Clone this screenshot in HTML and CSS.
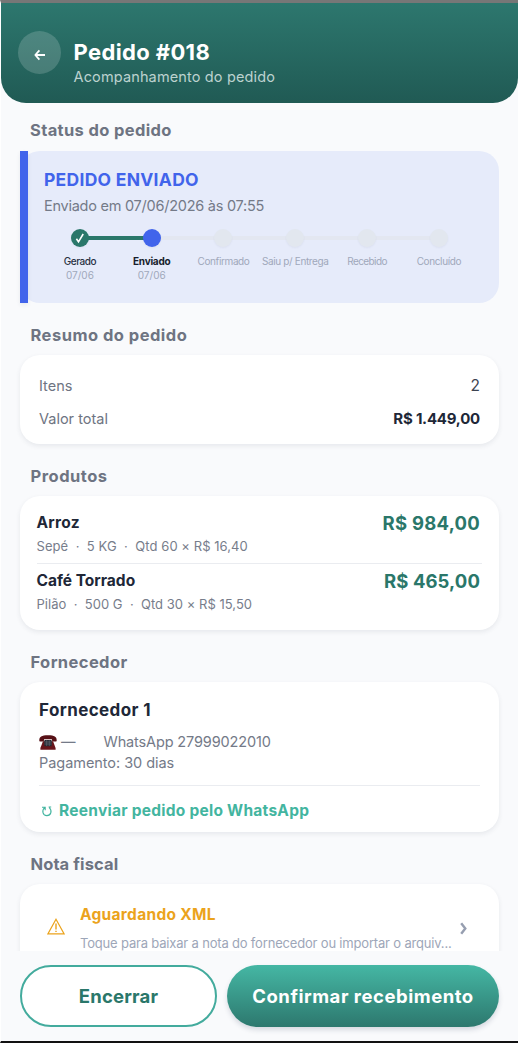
FILE: index.html
```html
<!DOCTYPE html>
<html lang="pt-BR">
<head>
<meta charset="utf-8">
<title>Pedido #018</title>
<link rel="stylesheet" href="styles.css">
</head>
<body>
<div class="app">
  <header class="header">
    <button class="back" aria-label="Voltar">
      <svg width="12" height="12" viewBox="0 0 12 12"><path d="M11 6H1.600M5.400 1.400 1.300 6l4.100 4.600" fill="none" stroke="#fff" stroke-width="1.800" stroke-linejoin="round"/></svg>
    </button>
    <div>
      <h1 class="title">Pedido #018</h1>
      <p class="subtitle">Acompanhamento do pedido</p>
    </div>
  </header>

  <main class="content">
    <h2 class="heading h-status">Status do pedido</h2>
    <section class="card status">
      <p class="status-name">PEDIDO ENVIADO</p>
      <p class="status-time">Enviado em 07/06/2026 às 07:55</p>
      <ol class="steps">
        <li class="step done"><span class="dot"><svg width="12" height="12" viewBox="0 0 12 12"><path d="M2.400 6.800 4.500 9.800 9.200 2" fill="none" stroke="#fff" stroke-width="1.600"/></svg></span><span class="label l1">Gerado</span><span class="date">07/06</span></li>
        <li class="step current"><span class="dot"></span><span class="label l2">Enviado</span><span class="date">07/06</span></li>
        <li class="step"><span class="dot"></span><span class="label l3">Confirmado</span></li>
        <li class="step"><span class="dot"></span><span class="label l3">Saiu p/ Entrega</span></li>
        <li class="step"><span class="dot"></span><span class="label l4">Recebido</span></li>
        <li class="step"><span class="dot"></span><span class="label l3">Concluído</span></li>
      </ol>
    </section>

    <h2 class="heading h-resumo">Resumo do pedido</h2>
    <section class="card summary">
      <div class="row"><span class="key">Itens</span><span class="count">2</span></div>
      <div class="row"><span class="key">Valor total</span><span class="total">R$ 1.449,00</span></div>
    </section>

    <h2 class="heading h-produtos">Produtos</h2>
    <section class="card products">
      <div class="product">
        <div class="line"><span class="name wide">Arroz</span><span class="price p1">R$ 984,00</span></div>
        <p class="detail">Sepé&nbsp; ·&nbsp; 5 KG&nbsp; ·&nbsp; Qtd 60 × R$ 16,40</p>
      </div>
      <div class="product">
        <div class="line"><span class="name">Café Torrado</span><span class="price">R$ 465,00</span></div>
        <p class="detail d2">Pilão&nbsp; ·&nbsp; 500 G&nbsp; ·&nbsp; Qtd 30 × R$ 15,50</p>
      </div>
    </section>

    <h2 class="heading h-fornecedor">Fornecedor</h2>
    <section class="card supplier">
      <p class="supplier-name">Fornecedor 1</p>
      <p class="contact">
        <svg class="phone" width="18" height="15" viewBox="0 0 18 15"><path d="M4 6.200h10L16.600 13v1.700H1.400V13Z" fill="#68151b"/><path d="M.3 5.600C.2 1.800 2.500.3 9 .3s8.800 1.500 8.700 5.300c0 .7-.4 1-1 1h-2.600c-.7 0-1-.5-1-1.200l-.2-1.200H5.100l-.2 1.200c0 .7-.3 1.200-1 1.200H1.300c-.6 0-1-.3-1-1Z" fill="#571116"/><rect x="5.200" y="5" width="7.600" height="6.200" rx="1" fill="#252a33"/><path d="M5.500 7h7M5.500 9h7M7.700 5.200v5.800M10.300 5.200v5.800" stroke="#747985" stroke-width=".5"/></svg>
        <span class="dash">—</span><span class="whats">WhatsApp 27999022010</span>
      </p>
      <p class="payment">Pagamento: 30 dias</p>
      <a class="resend"><svg width="12" height="12" viewBox="0 0 12 12"><path d="M1 2.200h3.200v3M3.900 2.400C.3 5.500 1.700 10.600 5.900 10.600c4 0 5.700-5 2.300-8M7.600 2h2.600" fill="none" stroke="#43b5a0" stroke-width="1.100"/></svg>Reenviar pedido pelo WhatsApp</a>
    </section>

    <h2 class="heading h-nota">Nota fiscal</h2>
    <section class="card invoice">
      <svg class="warn" width="18" height="17" viewBox="0 0 18 17"><path d="M9 1.300 17 15.800H1Z" fill="none" stroke="#eba31c" stroke-width="1.200"/><path d="M9 5.500v6M9 12.700v1.300" stroke="#eba31c" stroke-width="1.400"/></svg>
      <div class="invoice-text">
        <p class="invoice-title">Aguardando XML</p>
        <p class="invoice-hint">Toque para baixar a nota do fornecedor ou importar o arquiv...</p>
      </div>
      <svg class="chevron" width="8" height="13" viewBox="0 0 8 13"><path d="M1.200 1.200 5.300 6.500 1.200 11.800" fill="none" stroke="#969eb0" stroke-width="2.400"/></svg>
    </section>
  </main>

  <footer class="actions">
    <button class="btn outline">Encerrar</button>
    <button class="btn primary">Confirmar recebimento</button>
  </footer>
</div>
</body>
</html>
```
FILE: styles.css
```css
* { box-sizing: border-box; margin: 0; padding: 0; }
body { background: #fff; font-family: "Inter", "Open Sans", sans-serif; overflow: hidden; }
button { font-family: inherit; border: 0; }
svg { display: block; flex: none; }
p, h1, h2, span, a { white-space: nowrap; }

.app {
  width: 518px; height: 1043px;
  display: flex; flex-direction: column;
  border-top: 3px solid #777;
  border-bottom: 2px solid #111;
  border-left: 1px solid #fff;
  background: #f9fafc;
}

.header {
  flex: none; height: 100px;
  display: flex; gap: 12.5px;
  padding: 28px 17px 0;
  background: linear-gradient(#2d776e, #205a54);
  border-radius: 0 0 25px 25px;
  color: #fff;
}
.back {
  width: 43px; height: 43px; border-radius: 50%;
  background: rgba(255,255,255,.17);
  display: grid; place-items: center;
  padding-top: 4px;
}
.title { font-size: 22px; line-height: 28px; font-weight: 700; letter-spacing: .38px; margin-top: 7px; }
.subtitle { font-size: 14.5px; line-height: 20px; letter-spacing: .14px; color: #bcd2cf; margin-top: 1px; }

.content { flex: 1; min-height: 0; overflow: hidden; padding: 16px 19px 0; }
.heading {
  font-size: 16.5px; line-height: 22px; font-weight: 650; color: #6e7482;
  margin: 21px 0 9px 10.5px;
}
.h-status { margin: 0 0 10px 10px; letter-spacing: .36px; }
.h-resumo { letter-spacing: .48px; }
.h-produtos { letter-spacing: .5px; }
.h-fornecedor { letter-spacing: .4px; }
.h-nota { letter-spacing: .1px; }

.card {
  width: 479px; background: #fff; border-radius: 20px;
  box-shadow: 0 2px 5px rgba(40,50,80,.09);
}

.status { position: relative; height: 152px; padding: 18px 24px 0; background: #e6ebfa; box-shadow: none; }
.status::before { content: ""; position: absolute; left: 0; top: 0; width: 8px; height: 100%; background: #4164eb; box-shadow: 0 2px 4px rgba(40,50,80,.08); }
.status-name { font-size: 17.5px; line-height: 22px; font-weight: 700; letter-spacing: .28px; color: #4164eb; }
.status-time { font-size: 14.5px; line-height: 22px; letter-spacing: -.25px; color: #747a88; margin-top: 4px; }
.steps { display: grid; grid-template-columns: repeat(6, 71.8px); list-style: none; margin-top: 12px; }
.step { position: relative; display: flex; flex-direction: column; align-items: center; }
.step:not(:last-child)::after { content: ""; position: absolute; left: 50%; top: 7px; width: 100%; height: 4px; background: #e3e7f1; }
.step.done::after { background: #2a776a; }
.dot { position: relative; z-index: 1; width: 18px; height: 18px; border-radius: 50%; background: #e2e7ef; display: grid; place-items: center; box-shadow: 0 1px 2px rgba(60,70,100,.06); }
.done .dot { background: #2a776a; }
.current .dot { background: #4164eb; }
.label { font-size: 10px; line-height: 14px; margin-top: 7px; color: #a0a8ba; }
.l1 { color: #293142; letter-spacing: -.45px; font-weight: 500; }
.l2 { color: #171d2c; letter-spacing: -.25px; font-weight: 700; }
.l3 { letter-spacing: -.37px; }
.l4 { letter-spacing: -.58px; }
.date { font-size: 10px; line-height: 14px; color: #a0a8ba; }

.summary { height: 89px; padding: 14px 19px 0; }
.row { display: flex; justify-content: space-between; line-height: 33px; font-size: 14.5px; }
.key { color: #6e7482; }
.count { color: #3c4351; font-size: 15.5px; }
.total { font-size: 15px; font-weight: 700; letter-spacing: -.22px; color: #202737; }

.products { height: 134px; padding: 16px 17px 0 16.5px; }
.product + .product { border-top: 1px solid #eaecf0; padding-top: 6px; }
.line { display: flex; justify-content: space-between; line-height: 22px; padding-right: 2px; }
.name { font-size: 15.5px; font-weight: 650; letter-spacing: 0; color: #202737; }
.wide { letter-spacing: .3px; }
.price { font-size: 18.5px; font-weight: 700; letter-spacing: .1px; color: #2a776a; }
.p1 { letter-spacing: .25px; }
.detail { font-size: 13px; line-height: 20px; letter-spacing: .06px; color: #777d8b; margin-top: 2px; padding-bottom: 7px; }
.d2 { letter-spacing: .02px; }

.supplier { height: 150px; padding: 17px 19px 0; }
.supplier-name { font-size: 17px; line-height: 22px; font-weight: 650; letter-spacing: .4px; color: #202737; }
.contact { display: flex; align-items: center; height: 21px; margin-top: 10px; font-size: 14.5px; color: #747a88; }
.phone { margin-top: 2px; }
.dash { margin-left: 4px; width: 42.5px; }
.whats { letter-spacing: -.14px; }
.payment { font-size: 14.5px; line-height: 22px; color: #747a88; letter-spacing: -.05px; }
.resend { display: flex; align-items: center; gap: 6px; margin-top: 11px; padding: 14px 0 0 2px; border-top: 1px solid #eaecf0; font-size: 15.5px; line-height: 22px; font-weight: 650; letter-spacing: .26px; color: #43b5a0; }

.invoice { display: flex; padding: 20px 26px 30px 27px; }
.warn { margin-top: 14px; }
.invoice-text { margin-left: 15px; width: 380px; }
.invoice-title { font-size: 15.5px; line-height: 22px; font-weight: 650; letter-spacing: .3px; color: #eba31c; }
.invoice-hint { font-size: 13px; line-height: 20px; letter-spacing: -.18px; color: #9da6b8; margin-top: 7px; }
.chevron { margin-top: 18px; }

.actions { flex: none; height: 90px; display: flex; gap: 10px; padding: 14px 19px 0; }
.btn { height: 62px; border-radius: 31px; font-size: 18.5px; font-weight: 700; white-space: nowrap; }
.outline { width: 197px; background: #fff; border: 2px solid #43ab9d; color: #2a776a; letter-spacing: .2px; }
.primary { width: 272px; color: #fff; letter-spacing: .53px; background: linear-gradient(#45b7a4, #2d786e); box-shadow: 0 3px 5px rgba(40,50,80,.16); }
```
